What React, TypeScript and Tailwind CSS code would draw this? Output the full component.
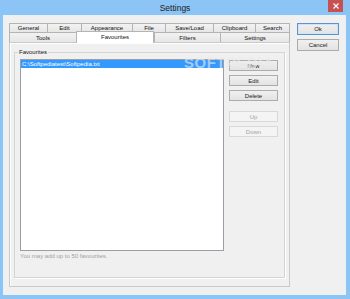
import React from "react";

const row1 = [
  { label: "General", w: "w-[38px]" },
  { label: "Edit", w: "w-[34px]" },
  { label: "Appearance", w: "w-[51px]" },
  { label: "File", w: "w-[33px]" },
  { label: "Save/Load", w: "w-[48px]" },
  { label: "Clipboard", w: "w-[42px]" },
  { label: "Search", w: "w-[35px]" },
];

const row2 = [
  { label: "Tools", w: "w-[67px]", sel: false },
  { label: "Favourites", w: "w-[78px]", sel: true },
  { label: "Filters", w: "w-[66px]", sel: false },
  { label: "Settings", w: "w-[70px]", sel: false },
];

function Btn({
  children,
  disabled,
  className = "",
}: {
  children: React.ReactNode;
  disabled?: boolean;
  className?: string;
}) {
  return (
    <div
      className={
        "flex items-center justify-center border text-[6px] leading-none " +
        (disabled
          ? "border-[#d9d9d9] bg-[#f4f4f4] text-[#a3a3a3] "
          : "border-[#acacac] bg-gradient-to-b from-[#f0f0f0] to-[#e3e3e3] text-[#1a1a1a] ") +
        className
      }
    >
      {children}
    </div>
  );
}

export default function App() {
  return (
    <div className="relative w-[350px] h-[299px] bg-[#8cc4f5] flex flex-col font-['Liberation_Sans',Arial,sans-serif] overflow-hidden">
      {/* Title bar */}
      <div className="h-[16px] grid grid-cols-[1fr_auto_1fr] items-center">
        <div />
        <div className="text-[8.5px] text-[#222] leading-none pt-[1px]">Settings</div>
        <div className="flex justify-end self-start">
          <div className="mr-[7px] w-[15px] h-[12px] bg-[#c75050] flex items-center justify-center">
            <svg width="6" height="6" viewBox="0 0 6 6">
              <path d="M0.5 0.5 L5.5 5.5 M5.5 0.5 L0.5 5.5" stroke="#fff" strokeWidth="1.2" />
            </svg>
          </div>
        </div>
      </div>

      {/* Client area */}
      <div className="ml-[4px] mr-[5px] mb-[5px] h-[278px] bg-[#f0f0f0] flex pt-[7px] pl-[5px] shadow-[0_0_0_1px_#e8f2fc]">
        {/* Tab control */}
        <div className="w-[281px] flex flex-col">
          <div className="h-[9px] flex">
            {row1.map((t, i) => (
              <div
                key={t.label}
                className={
                  t.w +
                  " h-full flex items-center justify-center border-t border-l border-[#b4b4b4] bg-gradient-to-b from-[#f2f2f2] to-[#e6e6e6] text-[6px] leading-none text-[#111]" +
                  (i === row1.length - 1 ? " border-r" : "")
                }
              >
                {t.label}
              </div>
            ))}
          </div>
          <div className="h-[10px] flex">
            {row2.map((t, i) => (
              <div
                key={t.label}
                className={
                  t.w +
                  " flex items-center justify-center border-t border-l border-[#b4b4b4] text-[6px] leading-none text-[#111]" +
                  (i === row2.length - 1 ? " border-r" : "") +
                  (t.sel
                    ? " bg-white -mt-px -mb-px relative z-10 border-r pb-[1px]"
                    : " bg-gradient-to-b from-[#f2f2f2] to-[#e6e6e6]")
                }
              >
                {t.label}
              </div>
            ))}
          </div>
          {/* Panel */}
          <div className="w-[281px] h-[245px] border border-[#c9c9c9] bg-[#f0f0f0] shadow-[inset_1px_1px_0_#ffffff] pl-[4px] pt-[5px]">
            <fieldset className="w-[271px] h-[230px] border border-[#d5d5d5] pl-[5px] pr-[5px] pt-[3px] shadow-[1px_1px_0_#ffffff]">
              <legend className="ml-[-2px] px-[1px] text-[6px] leading-[8px] text-[#111]">
                Favourites
              </legend>
              <div className="flex">
                <div className="flex flex-col">
                  <div className="w-[204px] h-[192px] bg-white border border-[#9a9ea6]">
                    <div className="h-[8px] bg-[#3399ff] text-white text-[6px] leading-[8px] pl-[1px] whitespace-nowrap">
                      C:\Softpediatest\Softpedia.txt
                    </div>
                  </div>
                  <div className="mt-[1px] text-[6px] leading-[8px] text-[#a0a0a0] whitespace-nowrap">
                    You may add up to 50 favourites.
                  </div>
                </div>
                <div className="ml-[5px] w-[49px] pt-[1px] flex flex-col">
                  <Btn className="h-[11px]">New</Btn>
                  <Btn className="h-[11px] mt-[4px]">Edit</Btn>
                  <Btn className="h-[11px] mt-[4px]">Delete</Btn>
                  <Btn disabled className="h-[11px] mt-[10px]">
                    Up
                  </Btn>
                  <Btn disabled className="h-[11px] mt-[4px]">
                    Down
                  </Btn>
                </div>
              </div>
            </fieldset>
          </div>
        </div>

        {/* Ok / Cancel */}
        <div className="ml-[7px] w-[42px] flex flex-col">
          <Btn className="h-[12px] !border-[#5a95cf] shadow-[inset_0_0_0_1px_#cfe3f7]">Ok</Btn>
          <Btn className="h-[12px] mt-[4px]">Cancel</Btn>
        </div>
      </div>

      {/* Softpedia watermark */}
      <div className="absolute left-[184px] top-[55px] pointer-events-none text-[15px] font-bold tracking-[0.5px] text-white/45 [text-shadow:0_0_1px_rgba(190,190,190,0.35)] leading-none">
        SOFTPEDIA
      </div>
    </div>
  );
}
